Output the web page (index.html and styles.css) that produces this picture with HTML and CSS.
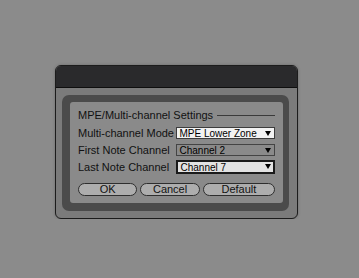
FILE: index.html
```html
<!DOCTYPE html>
<html lang="en">
<head>
  <meta charset="UTF-8" />
  <title>MPE Settings</title>
  <link rel="stylesheet" href="styles.css">
</head>
<body>
  <div class="dialog">
    <div class="titlebar"></div>
    <div class="dialog-body">
      <div class="frame">
        <div class="panel">
          <div class="group-title">
            <span>MPE/Multi-channel Settings</span>
            <div class="rule"></div>
          </div>

          <div class="row">
            <label>Multi-channel Mode</label>
            <div class="select select-light">MPE Lower Zone<span class="arrow"></span></div>
          </div>
          <div class="row">
            <label>First Note Channel</label>
            <div class="select select-flat">Channel 2<span class="arrow"></span></div>
          </div>
          <div class="row">
            <label>Last Note Channel</label>
            <div class="select select-focus">Channel 7<span class="arrow"></span></div>
          </div>

          <div class="buttons">
            <button class="btn btn-ok">OK</button>
            <button class="btn btn-cancel">Cancel</button>
            <button class="btn btn-default">Default</button>
          </div>
        </div>
      </div>
    </div>
  </div>
</body>
</html>
```

FILE: styles.css
```css
body {
  margin: 0;
  padding: 65px 0 0 55px;
  background: #8b8b8b;
  font-family: "Liberation Sans", Arial, sans-serif;
  font-size: 11px;
  color: #111;
}

.dialog {
  width: 241px;
  height: 152px;
  background: #7b7b7b;
  border: 1px solid #1c1c1c;
  border-radius: 6px;
  overflow: hidden;
  box-shadow: 0 0 3px rgba(0, 0, 0, 0.25);
}

.titlebar {
  height: 21px;
  background: #2a2a2c;
  border-bottom: 1px solid #0e0e0e;
}

.dialog-body {
  padding: 7px 8px 0 6px;
}

.frame {
  background: #4b4b4b;
  border-radius: 7px;
  padding: 7px 6px 8px 8px;
}

.panel {
  background: #8a8a8a;
  border-radius: 3px;
  padding: 5px 8px 7px 8px;
}

.group-title {
  display: flex;
  align-items: center;
  height: 16px;
  margin-bottom: 2px;
}

.group-title span {
  white-space: nowrap;
}

.rule {
  flex: 1;
  height: 1px;
  background: #3a3a3a;
  margin: 1px 0 0 4px;
}

.row {
  display: flex;
  align-items: center;
  height: 16px;
  margin-bottom: 1px;
}

.row label {
  width: 99px;
  white-space: nowrap;
}

.select {
  position: relative;
  width: 95px;
  height: 10px;
  line-height: 11px;
  padding-left: 2px;
  font-size: 10px;
  color: #000;
  border: 1px solid #3c3c3c;
}

.select-light {
  background: #f2f2f2;
}

.select-flat {
  background: #8a8a8a;
  border-color: #444;
}

.select-focus {
  background: #e2e2e2;
  height: 10px;
  border: 2px solid #1a1a1a;
  width: 93px;
}

.arrow {
  position: absolute;
  right: 3px;
  top: 3px;
  width: 0;
  height: 0;
  border-left: 3.5px solid transparent;
  border-right: 3.5px solid transparent;
  border-top: 5px solid #000;
}

.select-focus .arrow {
  right: 2px;
  top: 2px;
}

.buttons {
  display: flex;
  gap: 3px;
  margin-top: 8px;
}

.btn {
  height: 13px;
  padding: 0;
  border: 1px solid #2e2e2e;
  border-radius: 7px;
  background: #adadad;
  font-family: "Liberation Sans", Arial, sans-serif;
  font-size: 11px;
  line-height: 11px;
  color: #111;
}

.btn-ok {
  width: 60px;
}

.btn-cancel {
  width: 60px;
}

.btn-default {
  width: 73px;
}
```
